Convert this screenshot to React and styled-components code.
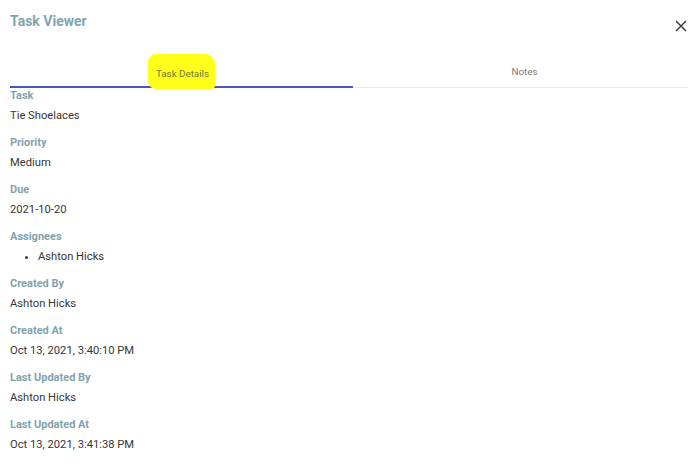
import React from "react";
import styled, { createGlobalStyle } from "styled-components";

const Global = createGlobalStyle`
  html, body { margin: 0; padding: 0; background: #fff; }
  body { font-family: Roboto, "Liberation Sans", sans-serif; }
`;

const Dialog = styled.div`
  width: 688px;
  height: 467px;
  box-sizing: border-box;
  padding: 0 0 0 10px;
  overflow: hidden;
  background: #fff;
`;

const Header = styled.div`
  display: flex;
  justify-content: space-between;
  align-items: flex-start;
  height: 54px;
  width: 678px;
`;

const Title = styled.h2`
  margin: 0;
  padding-top: 11px;
  font-size: 14px;
  line-height: 20px;
  font-weight: 700;
  color: #7fa3ae;
`;

const Close = styled.button`
  border: 0;
  background: none;
  padding: 0;
  margin: 20px 1px 0 0;
  width: 12px;
  height: 12px;
  display: flex;
  cursor: pointer;
`;

const Tabs = styled.div`
  display: flex;
  width: 686px;
  border-bottom: 1px solid #e8e8e8;
  height: 33px;
`;

const Tab = styled.div`
  flex: 1;
  display: flex;
  align-items: center;
  justify-content: center;
  padding-top: 2px;
  font-size: 9.8px;
  color: ${(p) => (p.$active ? "#6f7a3a" : "#777")};
  border-bottom: 2px solid ${(p) => (p.$active ? "#4555c4" : "transparent")};
  margin-bottom: -1px;
`;

const Highlight = styled.span`
  background: #ffff1a;
  padding: 14px 6px 10px 8px;
  border-radius: 8px 10px 4px 8px;
`;

const Body = styled.div`
  margin-top: 1px;
`;

const Label = styled.div`
  font-size: 11px;
  line-height: 14px;
  font-weight: 700;
  color: #7fa3ae;
  margin-bottom: 3px;
`;

const Value = styled.div`
  font-size: 11.2px;
  line-height: 20px;
  color: #363636;
  margin-bottom: 10px;
`;

const List = styled.ul`
  margin: 0 0 10px 0;
  padding-left: 28px;
  font-size: 11.2px;
  line-height: 20px;
  color: #363636;
`;

const fields = [
  ["Task", "Tie Shoelaces"],
  ["Priority", "Medium"],
  ["Due", "2021-10-20"],
  ["Assignees", ["Ashton Hicks"]],
  ["Created By", "Ashton Hicks"],
  ["Created At", "Oct 13, 2021, 3:40:10 PM"],
  ["Last Updated By", "Ashton Hicks"],
  ["Last Updated At", "Oct 13, 2021, 3:41:38 PM"],
];

export default function App() {
  return (
    <>
      <Global />
      <Dialog>
        <Header>
          <Title>Task Viewer</Title>
          <Close aria-label="close">
            <svg width="12" height="12" viewBox="0 0 12 12">
              <path d="M1 1L11 11M11 1L1 11" stroke="#333" strokeWidth="1.4" fill="none" />
            </svg>
          </Close>
        </Header>
        <Tabs>
          <Tab $active>
            <Highlight>Task Details</Highlight>
          </Tab>
          <Tab>Notes</Tab>
        </Tabs>
        <Body>
          {fields.map(([label, value]) => (
            <React.Fragment key={label}>
              <Label>{label}</Label>
              {Array.isArray(value) ? (
                <List>
                  {value.map((v) => (
                    <li key={v}>{v}</li>
                  ))}
                </List>
              ) : (
                <Value>{value}</Value>
              )}
            </React.Fragment>
          ))}
        </Body>
      </Dialog>
    </>
  );
}
